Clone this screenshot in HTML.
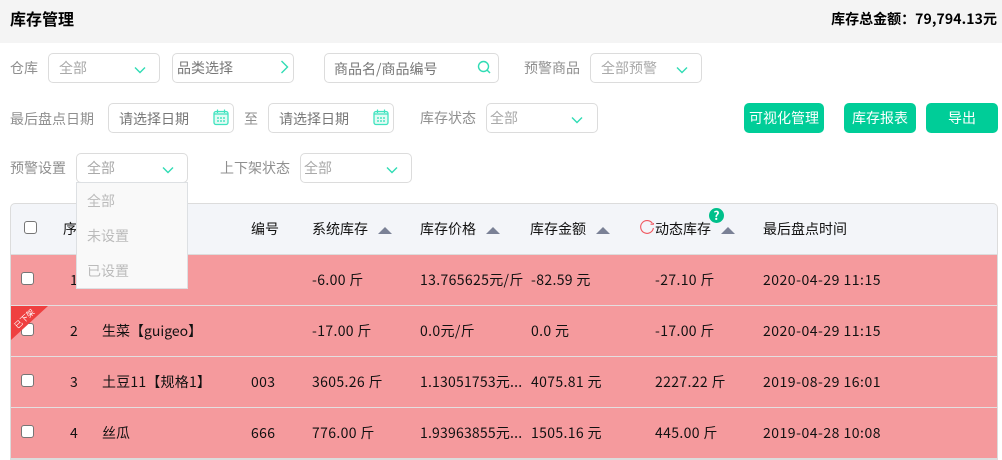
<!DOCTYPE html>
<html><head><meta charset="utf-8">
<style>
*{box-sizing:border-box;margin:0;padding:0}
html,body{width:1002px;height:460px;overflow:hidden;background:#fff}
body{position:relative;font-family:"Noto Sans CJK SC","Liberation Sans",sans-serif;font-size:14px;color:#000}
.a{position:absolute;white-space:nowrap;line-height:20px}
.l{color:#8f8f8f}
.b{position:absolute;height:30px;border:1px solid #dcdcdc;border-radius:5px;background:#fff}
.v{position:absolute;white-space:nowrap;line-height:20px;color:#a9a9a9}
.d{color:#777}
.btn{position:absolute;top:103px;height:30px;background:#00cd98;border-radius:5px;color:#fff;text-align:center;line-height:30px;font-size:14px}
.row{position:absolute;left:11px;width:986px;height:50px;background:#f59a9d}
.sep{position:absolute;left:11px;width:986px;height:1px;background:#e4dfe0}
.c{position:absolute;left:21px;width:13px;height:13px;background:#fff;border:1px solid #767676;border-radius:3px}
.t{position:absolute;white-space:nowrap;line-height:20px;color:#111;letter-spacing:.35px}
.n{position:absolute;white-space:nowrap;line-height:20px;color:#111}
.dt{position:absolute;white-space:nowrap;line-height:20px;color:#111;letter-spacing:.5px}
.h{position:absolute;white-space:nowrap;line-height:20px;color:#111;top:219px}
svg{position:absolute;overflow:visible}
</style></head><body>
<div style="position:absolute;left:0;top:0;width:1002px;height:43px;background:#f4f4f4"></div>
<div class="a" style="left:10px;top:8px;font-size:16px;font-weight:700">库存管理</div>
<div class="a" style="right:5px;top:9px;font-weight:700">库存总金额：<span style="letter-spacing:.1px">79,794.13</span>元</div>

<div class="a l" style="left:10px;top:58px">仓库</div>
<div class="b" style="left:48px;top:53px;width:112px"></div>
<div class="v" style="left:59px;top:58px">全部</div>
<svg style="left:134px;top:66px" width="12" height="8"><path d="M1 1.5L6 6.5L11 1.5" fill="none" stroke="#2fdcb4" stroke-width="1.4"/></svg>

<div class="b" style="left:172px;top:53px;width:122px"></div>
<div class="v d" style="left:177px;top:58px">品类选择</div>
<svg style="left:280px;top:60px" width="9" height="14"><path d="M1.5 1L7.5 7L1.5 13" fill="none" stroke="#2fdcb4" stroke-width="1.4"/></svg>

<div class="b" style="left:324px;top:53px;width:175px"></div>
<div class="v d" style="left:334px;top:59px">商品名/商品编号</div>
<svg style="left:477px;top:60px" width="14" height="14"><circle cx="6.5" cy="6.5" r="5" fill="none" stroke="#2fdcb4" stroke-width="1.4"/><path d="M10 10L13 13" stroke="#2fdcb4" stroke-width="1.4"/></svg>

<div class="a l" style="left:524px;top:58px">预警商品</div>
<div class="b" style="left:590px;top:53px;width:112px"></div>
<div class="v" style="left:601px;top:58px">全部预警</div>
<svg style="left:676px;top:66px" width="12" height="8"><path d="M1 1.5L6 6.5L11 1.5" fill="none" stroke="#2fdcb4" stroke-width="1.4"/></svg>

<div class="a l" style="left:10px;top:109px">最后盘点日期</div>
<div class="b" style="left:108px;top:103px;width:126px"></div>
<div class="v d" style="left:119px;top:109px">请选择日期</div>
<svg style="left:213px;top:109px" width="16" height="17"><rect x="1" y="2.5" width="14" height="13" rx="2" fill="#e2fbf4" stroke="#3fe3bf" stroke-width="1.3"/><path d="M4.5 0.5V4M11.5 0.5V4M1 5H15" stroke="#3fe3bf" stroke-width="1.2"/><path d="M5 8V13M8 8V13M11 8V13" stroke="#3fe3bf" stroke-width="1.4" stroke-dasharray="2 1"/></svg>
<div class="a l" style="left:244px;top:109px">至</div>
<div class="b" style="left:268px;top:103px;width:126px"></div>
<div class="v d" style="left:279px;top:109px">请选择日期</div>
<svg style="left:373px;top:109px" width="16" height="17"><rect x="1" y="2.5" width="14" height="13" rx="2" fill="#e2fbf4" stroke="#3fe3bf" stroke-width="1.3"/><path d="M4.5 0.5V4M11.5 0.5V4M1 5H15" stroke="#3fe3bf" stroke-width="1.2"/><path d="M5 8V13M8 8V13M11 8V13" stroke="#3fe3bf" stroke-width="1.4" stroke-dasharray="2 1"/></svg>
<div class="a l" style="left:420px;top:108px">库存状态</div>
<div class="b" style="left:486px;top:103px;width:112px"></div>
<div class="v" style="left:490px;top:108px">全部</div>
<svg style="left:571px;top:116px" width="12" height="8"><path d="M1 1.5L6 6.5L11 1.5" fill="none" stroke="#2fdcb4" stroke-width="1.4"/></svg>

<div class="btn" style="left:744px;width:80px">可视化管理</div>
<div class="btn" style="left:844px;width:72px">库存报表</div>
<div class="btn" style="left:926px;width:72px">导出</div>

<div class="a l" style="left:10px;top:158px">预警设置</div>
<div class="b" style="left:76px;top:153px;width:112px"></div>
<div class="v" style="left:87px;top:158px">全部</div>
<svg style="left:162px;top:166px" width="12" height="8"><path d="M1 1.5L6 6.5L11 1.5" fill="none" stroke="#2fdcb4" stroke-width="1.4"/></svg>
<div class="a l" style="left:220px;top:158px">上下架状态</div>
<div class="b" style="left:300px;top:153px;width:112px"></div>
<div class="v" style="left:304px;top:158px">全部</div>
<svg style="left:386px;top:166px" width="12" height="8"><path d="M1 1.5L6 6.5L11 1.5" fill="none" stroke="#2fdcb4" stroke-width="1.4"/></svg>

<!-- table -->
<div style="position:absolute;left:10px;top:203px;width:988px;height:257px;background:#dcdcdc;border-radius:5px 5px 0 0"></div>
<div style="position:absolute;left:11px;top:204px;width:986px;height:50px;background:#f3f5f9;border-radius:4px 4px 0 0"></div>
<div class="row" style="top:255px"></div>
<div class="sep" style="top:305px"></div>
<div class="row" style="top:306px"></div>
<div class="sep" style="top:356px"></div>
<div class="row" style="top:357px"></div>
<div class="sep" style="top:407px"></div>
<div class="row" style="top:408px"></div>

<div class="c" style="left:24px;top:221px"></div>
<div class="h" style="left:63px">序号</div>
<div class="h" style="left:251px">编号</div>
<div class="h" style="left:312px">系统库存</div>
<svg style="left:378px;top:227px" width="14" height="7"><path d="M7 0L14 7H0Z" fill="#7a8196"/></svg>
<div class="h" style="left:420px">库存价格</div>
<svg style="left:486px;top:227px" width="14" height="7"><path d="M7 0L14 7H0Z" fill="#7a8196"/></svg>
<div class="h" style="left:530px">库存金额</div>
<svg style="left:596px;top:227px" width="14" height="7"><path d="M7 0L14 7H0Z" fill="#7a8196"/></svg>
<svg style="left:640px;top:220px" width="15" height="15"><path d="M12.4 3.4A6.4 6.4 0 1 0 13.4 8" fill="none" stroke="#f0575f" stroke-width="1.1"/><path d="M10.5 4.2H13.4V3" fill="none" stroke="#f0575f" stroke-width="1"/></svg>
<div class="h" style="left:655px">动态库存</div>
<svg style="left:721px;top:227px" width="14" height="7"><path d="M7 0L14 7H0Z" fill="#7a8196"/></svg>
<div style="position:absolute;left:709px;top:208px;width:15px;height:15px;border-radius:50%;background:#00c08b;color:#fff;font-size:12px;font-weight:700;text-align:center;line-height:15px">?</div>
<div class="h" style="left:763px">最后盘点时间</div>

<!-- row1 -->
<div class="c" style="top:272px"></div>
<div class="n" style="left:70px;top:270px">1</div>
<div class="t" style="left:312px;top:270px">-6.00 斤</div>
<div class="t" style="left:420px;top:270px">13.765625元/斤</div>
<div class="t" style="left:531px;top:270px">-82.59 元</div>
<div class="t" style="left:655px;top:270px">-27.10 斤</div>
<div class="dt" style="left:763px;top:270px">2020-04-29 11:15</div>
<!-- row2 -->
<div class="c" style="top:323px"></div>
<div class="n" style="left:70px;top:321px">2</div>
<div class="n" style="left:102px;top:321px">生菜【guigeo】</div>
<div class="t" style="left:312px;top:321px">-17.00 斤</div>
<div class="t" style="left:420px;top:321px">0.0元/斤</div>
<div class="t" style="left:531px;top:321px">0.0 元</div>
<div class="t" style="left:655px;top:321px">-17.00 斤</div>
<div class="dt" style="left:763px;top:321px">2020-04-29 11:15</div>
<!-- row3 -->
<div class="c" style="top:374px"></div>
<div class="n" style="left:70px;top:372px">3</div>
<div class="n" style="left:102px;top:372px;letter-spacing:.2px">土豆11【规格1】</div>
<div class="t" style="left:251px;top:372px">003</div>
<div class="t" style="left:312px;top:372px">3605.26 斤</div>
<div class="n" style="left:420px;top:372px;letter-spacing:.2px">1.13051753元...</div>
<div class="t" style="left:531px;top:372px">4075.81 元</div>
<div class="t" style="left:655px;top:372px">2227.22 斤</div>
<div class="dt" style="left:763px;top:372px">2019-08-29 16:01</div>
<!-- row4 -->
<div class="c" style="top:425px"></div>
<div class="n" style="left:70px;top:423px">4</div>
<div class="n" style="left:102px;top:423px">丝瓜</div>
<div class="t" style="left:251px;top:423px">666</div>
<div class="t" style="left:312px;top:423px">776.00 斤</div>
<div class="n" style="left:420px;top:423px;letter-spacing:.2px">1.93963855元...</div>
<div class="t" style="left:531px;top:423px">1505.16 元</div>
<div class="t" style="left:655px;top:423px">445.00 斤</div>
<div class="dt" style="left:763px;top:423px">2019-04-28 10:08</div>

<svg style="left:11px;top:306px" width="37" height="34"><path d="M0 0H37L0 34Z" fill="#ef4040"/><text x="0" y="0" transform="translate(6.5 23) rotate(-43)" font-size="8" fill="#fff" font-family="Noto Sans CJK SC,sans-serif">已下架</text></svg>

<!-- dropdown -->
<div style="position:absolute;left:76px;top:182px;width:112px;height:107px;background:#f9f9f9;border:1px solid #dde0e3"></div>
<div class="a" style="left:87px;top:191px;color:#bbb">全部</div>
<div class="a" style="left:87px;top:226px;color:#bbb">未设置</div>
<div class="a" style="left:87px;top:261px;color:#bbb">已设置</div>
</body></html>
